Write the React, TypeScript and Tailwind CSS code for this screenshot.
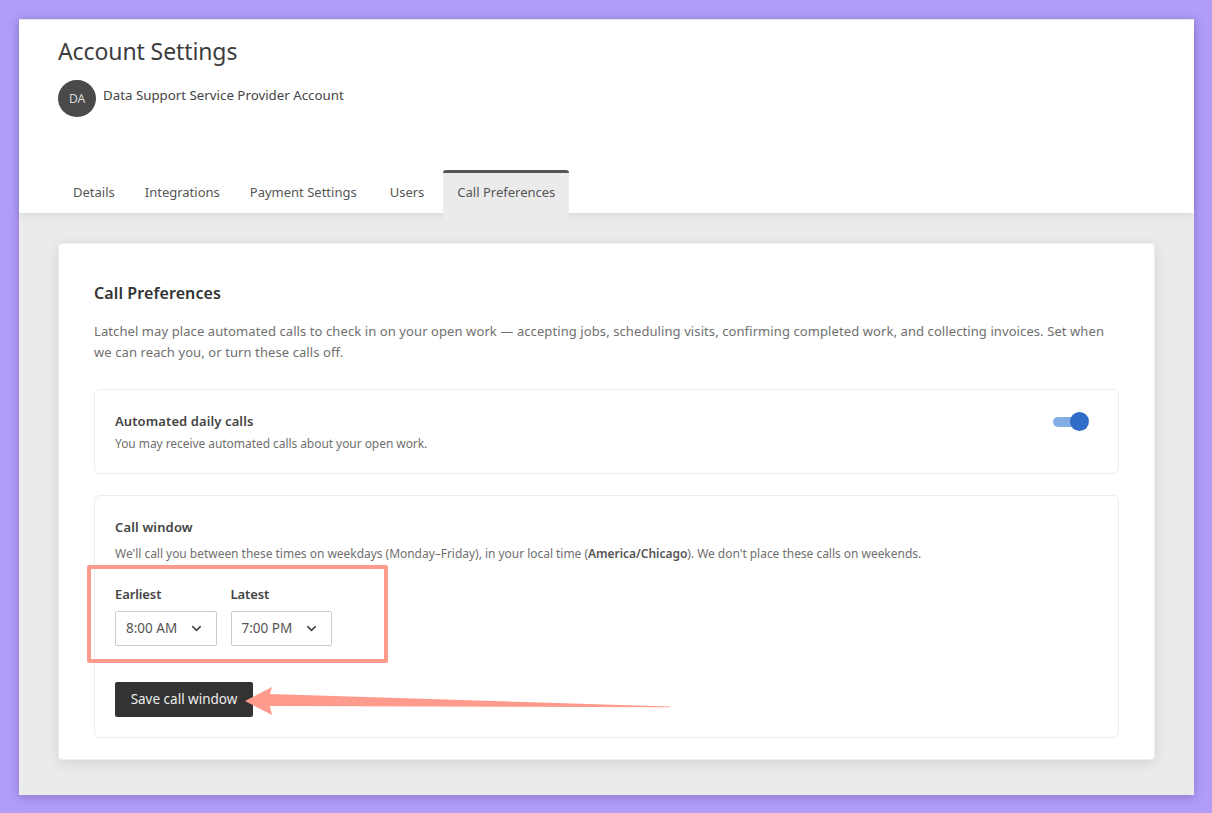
import { ChevronDown } from "lucide-react";

const tabs = ["Details", "Integrations", "Payment Settings"];

function TimeSelect({ label, value }: { label: string; value: string }) {
  return (
    <div className="flex flex-col">
      <span className="text-[13px] leading-[18px] font-semibold tracking-[-0.1px] text-[#444]">{label}</span>
      <div className="mt-[8px] flex h-[35px] w-[101.5px] items-center justify-between rounded-[2px] border border-[#ccc] bg-white pl-[10px] pr-[12px] text-[13.5px] text-[#555]">
        <span>{value}</span>
        <ChevronDown className="h-[15px] w-[15px] text-[#444]" strokeWidth={2.5} />
      </div>
    </div>
  );
}

export default function App() {
  return (
    <div className="h-[813px] w-[1212px] overflow-hidden bg-[#b19df7] pl-[19px] pr-[18px] pt-[19px] font-['Noto_Sans',sans-serif]">
      <div className="relative flex h-[776px] w-[1175px] flex-col bg-[#ebebeb] shadow-[0_2px_10px_rgba(70,50,130,0.35)]">
        <header className="h-[194px] border-t border-[#e6e6e6] bg-white pl-[39px] shadow-[0_2px_8px_rgba(0,0,0,0.08)]">
          <h1 className="mt-[16px] text-[23px] leading-[30px] tracking-[-0.1px] text-[#3d3d3d]">Account Settings</h1>
          <div className="mt-[14px] flex items-start gap-[7px]">
            <div className="flex h-[37px] w-[38px] items-center justify-center rounded-full bg-[#4a4a4a] text-[12px] text-[#ddd]">DA</div>
            <span className="mt-[5px] text-[13.3px] leading-[20px] text-[#444]">Data Support Service Provider Account</span>
          </div>
          <nav className="mt-[54px] flex items-start text-[13px] text-[#555]">
            {tabs.map((t) => (
              <span key={t} className="flex h-[44px] items-center px-[15px]">{t}</span>
            ))}
            <span className="ml-[3px] flex h-[44px] items-center px-[15px]">Users</span>
            <span className="relative z-10 -mt-[1px] ml-[4px] h-[51px] rounded-t-[3px] border-t-[3px] border-[#555] bg-[#ebebeb] px-[14px] pt-[10px] leading-[18px]">Call Preferences</span>
          </nav>
        </header>
        <main className="px-[39px] pt-[30px]">
          <section className="h-[517px] rounded-[4px] border border-[#eee] bg-white px-[35px] pt-[36px] shadow-[0_3px_14px_rgba(0,0,0,0.1)]">
            <h2 className="text-[16px] leading-[26px] font-semibold tracking-[0.1px] text-[#333]">Call Preferences</h2>
            <p className="mt-[15px] w-[1024px] text-[13px] leading-[21px] tracking-[0.09px] text-[#707070]">
              Latchel may place automated calls to check in on your open work — accepting jobs, scheduling visits, confirming completed work, and collecting invoices. Set when we can reach you, or turn these calls off.
            </p>
            <div className="mt-[26px] flex h-[85px] items-start justify-between rounded-[6px] border border-[#ececec] pl-[20px] pr-[21px] pt-[21px]">
              <div>
                <div className="text-[13px] leading-[20px] font-semibold tracking-[0.1px] text-[#444]">Automated daily calls</div>
                <div className="mt-[3px] text-[12px] leading-[20px] tracking-[-0.06px] text-[#707070]">You may receive automated calls about your open work.</div>
              </div>
              <div className="relative mr-[8px] mt-[1px] h-[20px] w-[36px]">
                <div className="absolute left-0 top-[5px] h-[10px] w-[34px] rounded-full bg-[#82aee3]" />
                <div className="absolute right-0 top-0 h-[19px] w-[19px] rounded-full bg-[#2f6cc8]" />
              </div>
            </div>
            <div className="mt-[21px] h-[243px] rounded-[6px] border border-[#ececec] pl-[20px] pr-[21px] pt-[21px]">
              <div className="text-[13px] leading-[20px] font-semibold tracking-[0.15px] text-[#444]">Call window</div>
              <p className="mt-[7px] text-[12px] leading-[20px] tracking-[-0.03px] text-[#707070]">
                We'll call you between these times on weekdays (Monday–Friday), in your local time (<b className="font-semibold text-[#555]">America/Chicago</b>). We don't place these calls on weekends.
              </p>
              <div className="mt-[21px] flex gap-[14px]">
                <TimeSelect label="Earliest" value="8:00 AM" />
                <TimeSelect label="Latest" value="7:00 PM" />
              </div>
              <button className="mt-[36px] flex h-[35px] w-[138px] items-center justify-center rounded-[2px] bg-[#333] text-[13.5px] text-[#eee]">Save call window</button>
            </div>
          </section>
        </main>
        {/* Annotations on top of the screenshot */}
        <div className="absolute left-[68px] top-[546px] h-[98px] w-[301px] rounded-[2px] border-[4px] border-[#ff9b8c]" />
        <svg className="absolute left-[225px] top-[665px]" width="430" height="40" viewBox="0 0 430 40">
          <path d="M1 17 L28 3 L26 10 L426 22.4 L426 23.2 L26 22 L28 31 Z" fill="#ff9b8c" />
        </svg>
      </div>
    </div>
  );
}
